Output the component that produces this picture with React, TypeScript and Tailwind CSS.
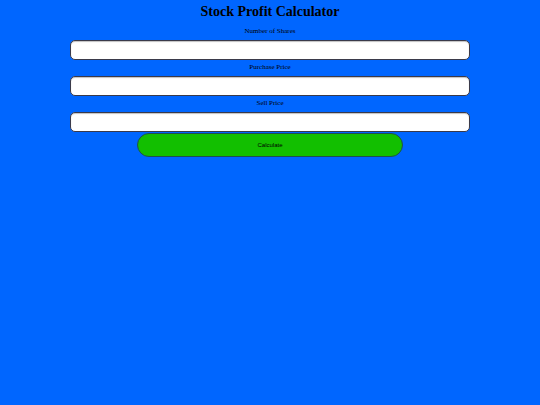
export default function App() {
  const fields = ["Number of Shares", "Purchase Price", "Sell Price"];
  return (
    <div className="min-h-[405px] bg-[#0066ff] font-['Liberation_Serif',serif] text-black">
      <div className="w-[400px] mx-auto flex flex-col items-center pt-[3px]">
        <h1 className="text-[14px] leading-[17px] font-bold">Stock Profit Calculator</h1>
        <div className="w-full flex flex-col items-center mt-[7px]">
          {fields.map((f) => (
            <div key={f} className="w-full flex flex-col items-center">
              <label className="text-[7px] leading-[9px]">{f}</label>
              <input
                type="text"
                className="mt-[4px] mb-[3px] w-full h-[20px] bg-white rounded-[5px] border border-[#3a3a4a] shadow-[inset_0_1px_1px_rgba(0,0,0,0.25)] outline-none"
              />
            </div>
          ))}
          <button className="w-[266px] h-[24px] -mt-[2px] rounded-full bg-[#12bf00] border border-[#1f4f4f] text-[6px] font-['Liberation_Sans',sans-serif]">
            Calculate
          </button>
        </div>
      </div>
    </div>
  );
}
